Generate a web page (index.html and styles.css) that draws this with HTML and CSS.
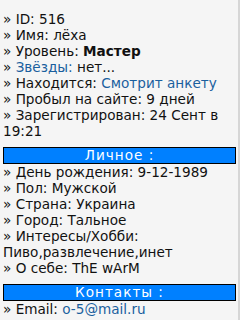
FILE: index.html
```html
<!DOCTYPE html>
<html lang="ru">
<head>
    <meta charset="UTF-8">
    <meta name="viewport" content="width=device-width, initial-scale=1.0">
    <title>Анкета</title>
    <link rel="stylesheet" href="styles.css">
</head>
<body>
    <div class="page">
        <div class="row">&raquo; ID: 516</div>
        <div class="row">&raquo; Имя: лёха</div>
        <div class="row">&raquo; Уровень: <b>Мастер</b></div>
        <div class="row">&raquo; <a href="#">Звёзды:</a> нет...</div>
        <div class="row">&raquo; Находится: <a href="#">Смотрит анкету</a></div>
        <div class="row">&raquo; Пробыл на сайте: 9 дней</div>
        <div class="row">&raquo; Зарегистрирован: 24 Сент в 19:21</div>

        <div class="head">Личное :</div>
        <div class="row">&raquo; День рождения: 9-12-1989</div>
        <div class="row">&raquo; Пол: Мужской</div>
        <div class="row">&raquo; Страна: Украина</div>
        <div class="row">&raquo; Город: Тальное</div>
        <div class="row">&raquo; Интересы/Хобби: Пиво,развлечение,инет</div>
        <div class="row">&raquo; О себе: ThE wArM</div>

        <div class="head">Контакты :</div>
        <div class="row">&raquo; Email: <a href="#">o-5@mail.ru</a></div>
    </div>
</body>
</html>
```

FILE: styles.css
```css
html {
    background: #f5f5f5;
}
body {
    margin: 0;
    font-family: "DejaVu Sans", sans-serif;
    font-size: 13.6px;
    line-height: 16px;
    color: #111;
}
.page {
    min-height: 320px;
    box-sizing: border-box;
    padding: 11px 2px 0 3px;
    border-right: 2px solid #d6d6d6;
}
a {
    color: #1a5f9e;
    text-decoration: none;
}
b {
    font-weight: bold;
}
.head {
    margin: 8px 0 0;
    border: 1px solid #000;
    background: #0080ff;
    color: #fff;
    text-align: center;
    letter-spacing: 1px;
    line-height: 15px;
}
```
